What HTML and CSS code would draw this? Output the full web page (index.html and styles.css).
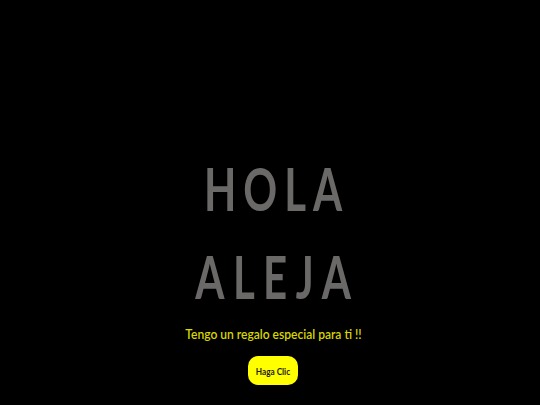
FILE: index.html
```html
<!DOCTYPE html>
<html lang="es">
<head>
<meta charset="utf-8">
<title>Hola Aleja</title>
<link rel="stylesheet" href="styles.css">
</head>
<body>
<main class="stage">
  <h1 class="greeting">
    <span class="line">HOLA</span>
    <span class="line line-wide">ALEJA</span>
  </h1>
  <p class="subtitle">Tengo un regalo especial para ti !!</p>
  <button class="cta" type="button"><span class="cta-label">Haga Clic</span></button>
</main>
</body>
</html>
```

FILE: styles.css
```css
html, body {
  margin: 0;
  padding: 0;
  background: #000;
  height: 100%;
}

.stage {
  display: flex;
  flex-direction: column;
  align-items: center;
  padding-top: 144px;
  padding-left: 6px;
}

.greeting {
  margin: 0;
  font-family: "Lato", "Noto Sans", sans-serif;
  font-weight: 700;
  font-size: 60px;
  line-height: 88px;
  color: #6b6868;
  letter-spacing: 10px;
  display: flex;
  flex-direction: column;
  align-items: center;
  transform: scaleX(0.7);
}

.line {
  display: block;
  padding-left: 10px;
}

.line-wide {
  letter-spacing: 12px;
  padding-left: 12px;
}

.subtitle {
  margin: 5px 0 0;
  font-family: "Lato", "Noto Sans", sans-serif;
  font-weight: 600;
  font-size: 14px;
  line-height: 18px;
  color: #d9d600;
  transform: scaleX(0.86);
}

.cta {
  margin-top: 13px;
  width: 50px;
  height: 29px;
  padding: 0;
  border: none;
  border-radius: 10px;
  background: #ffff00;
  color: #1a1a1a;
  font-family: "Lato", "Noto Sans", sans-serif;
  font-weight: 700;
  font-size: 10px;
}

.cta-label {
  display: inline-block;
  transform: scaleX(0.82);
}
```
